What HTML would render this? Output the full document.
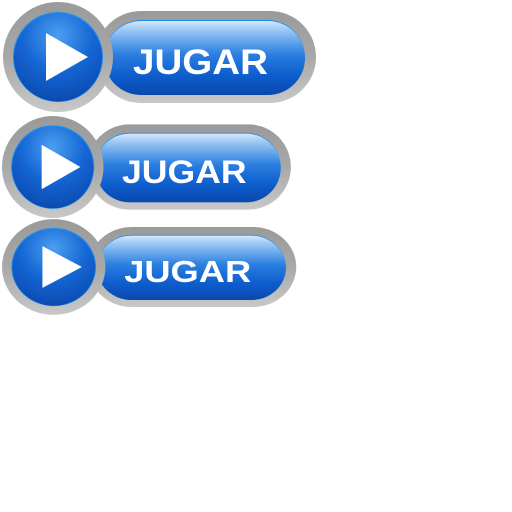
<!DOCTYPE html>
<html><head><style>html,body{margin:0;padding:0;background:#fff;width:512px;height:512px;overflow:hidden}svg{display:block}</style></head>
<body>
<svg width="512" height="512" viewBox="0 0 512 512" xmlns="http://www.w3.org/2000/svg">
<defs>
<linearGradient id="gr" x1="0" y1="0" x2="0" y2="1">
<stop offset="0" stop-color="#9a9a9a"/><stop offset="0.5" stop-color="#a8a8a8"/><stop offset="1" stop-color="#c8c8c8"/></linearGradient>
<linearGradient id="bl" x1="0" y1="0" x2="0" y2="1">
<stop offset="0" stop-color="#d6e8fb"/><stop offset="0.12" stop-color="#9cc8f4"/><stop offset="0.45" stop-color="#2a7fe0"/><stop offset="0.75" stop-color="#0d5ccc"/><stop offset="1" stop-color="#0a48ae"/></linearGradient>
<radialGradient id="cb" cx="0.5" cy="0.25" r="0.8">
<stop offset="0" stop-color="#4a9ff0"/><stop offset="0.5" stop-color="#1566d4"/><stop offset="1" stop-color="#0a47ac"/></radialGradient>
<g id="btn">
<rect x="95" y="11" width="221" height="92" rx="46" fill="url(#gr)"/>
<rect x="104" y="20" width="201" height="75" rx="37.5" fill="#1a8cf0"/>
<rect x="104" y="21" width="201" height="74" rx="37" fill="url(#bl)"/>
<circle cx="58" cy="57" r="55" fill="url(#gr)"/>
<circle cx="58" cy="57" r="45" fill="#1a8cf0"/>
<circle cx="58" cy="57.5" r="44" fill="url(#cb)"/>
<polygon points="46,33 46,81 88,57" fill="#fff"/>
<text x="133" y="74" font-family="Liberation Sans, sans-serif" font-weight="bold" font-size="35" fill="#fff" textLength="135" lengthAdjust="spacingAndGlyphs">JUGAR</text>
</g>
</defs>
<use href="#btn"/>
<use href="#btn" transform="translate(-0.8,114.2) scale(0.923,0.927)"/>
<use href="#btn" transform="translate(-0.8,217.4) scale(0.94,0.87)"/>
</svg>
</body></html>
